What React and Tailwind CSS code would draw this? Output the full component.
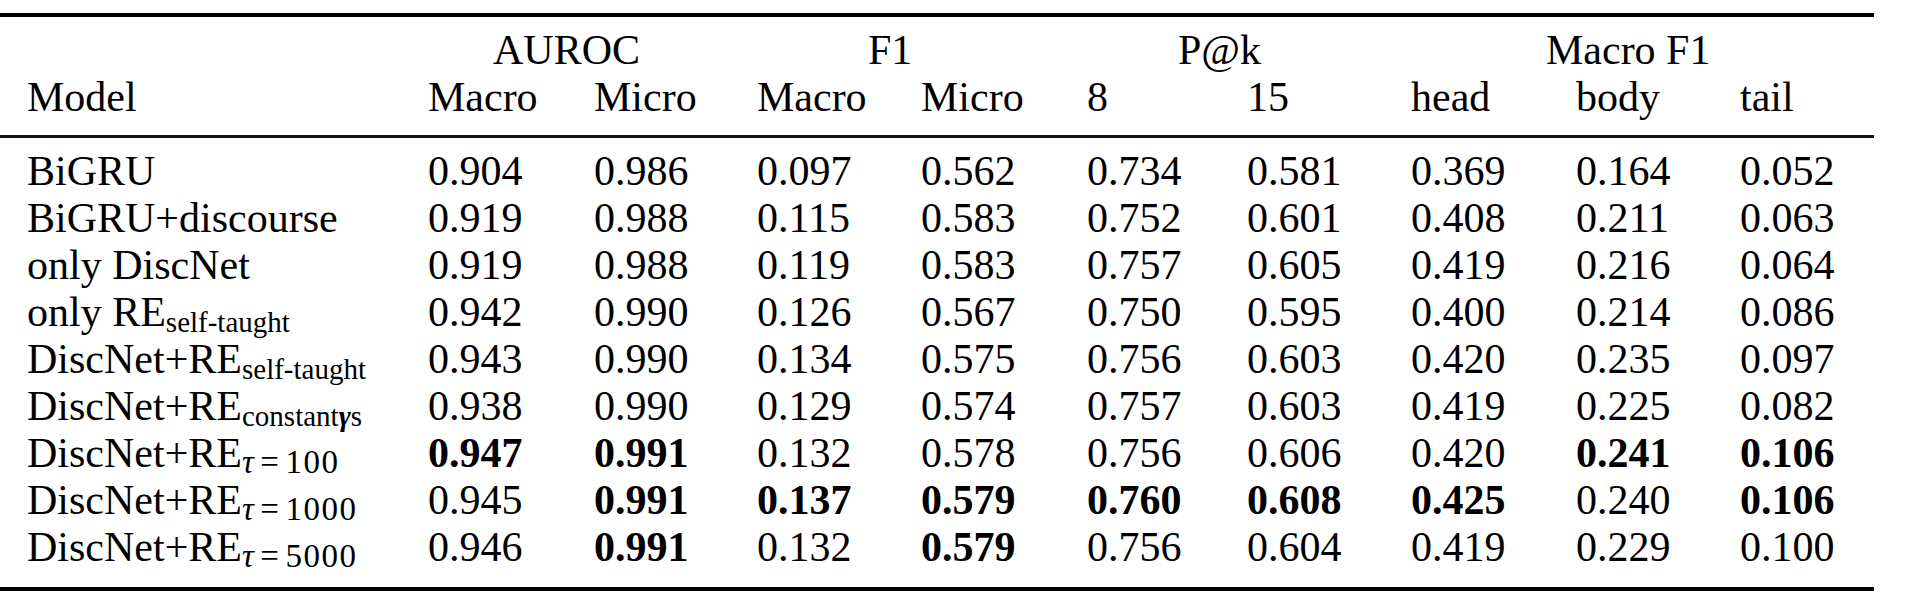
const cols = 'grid grid-cols-[428px_166px_163px_164px_166px_160px_164px_165px_164px_134px]';

function Tau({ n }) {
  return (
    <span className="text-[33px] leading-none align-[-6px] tracking-[1.5px]">
      <span className="italic mr-[5px]">τ</span>
      <span className="mr-[5px]">=</span>
      {n}
    </span>
  );
}

function Sub({ children }) {
  return <span className="text-[29px] leading-none align-[-6px]">{children}</span>;
}

const rows = [
  { name: <>BiGRU</>, v: ['0.904', '0.986', '0.097', '0.562', '0.734', '0.581', '0.369', '0.164', '0.052'] },
  { name: <>BiGRU+discourse</>, v: ['0.919', '0.988', '0.115', '0.583', '0.752', '0.601', '0.408', '0.211', '0.063'] },
  { name: <>only DiscNet</>, v: ['0.919', '0.988', '0.119', '0.583', '0.757', '0.605', '0.419', '0.216', '0.064'] },
  { name: <>only RE<Sub>self-taught</Sub></>, v: ['0.942', '0.990', '0.126', '0.567', '0.750', '0.595', '0.400', '0.214', '0.086'] },
  { name: <>DiscNet+RE<Sub>self-taught</Sub></>, v: ['0.943', '0.990', '0.134', '0.575', '0.756', '0.603', '0.420', '0.235', '0.097'] },
  { name: <>DiscNet+RE<Sub>constant<b className="italic">γ</b>s</Sub></>, v: ['0.938', '0.990', '0.129', '0.574', '0.757', '0.603', '0.419', '0.225', '0.082'] },
  { name: <>DiscNet+RE<Tau n="100" /></>, v: ['*0.947', '*0.991', '0.132', '0.578', '0.756', '0.606', '0.420', '*0.241', '*0.106'] },
  { name: <>DiscNet+RE<Tau n="1000" /></>, v: ['0.945', '*0.991', '*0.137', '*0.579', '*0.760', '*0.608', '*0.425', '0.240', '*0.106'] },
  { name: <>DiscNet+RE<Tau n="5000" /></>, v: ['0.946', '*0.991', '0.132', '*0.579', '0.756', '0.604', '0.419', '0.229', '0.100'] },
];

const subheads = ['Macro', 'Micro', 'Macro', 'Micro', '8', '15', 'head', 'body', 'tail'];

export default function App() {
  return (
    <div className="w-[1908px] h-[612px] bg-white text-black pt-[13px] overflow-hidden" style={{ fontFamily: '"Liberation Serif", "Times New Roman", serif' }}>
      <div className="w-[1874px] text-[42px] leading-[47px]">
        <div className="h-[4px] bg-black" />

        <div className={`${cols} mt-[10px] h-[47px]`}>
          <div />
          <div className="col-span-2 pl-[65px]">AUROC</div>
          <div className="col-span-2 pl-[111px]">F1</div>
          <div className="col-span-2 pl-[91px]">P@k</div>
          <div className="col-span-3 pl-[135px]">Macro F1</div>
          <div />
        </div>

        <div className={`${cols} h-[47px]`}>
          <div className="pl-[27px]">Model</div>
          {subheads.map((s, i) => (
            <div key={i}>{s}</div>
          ))}
          <div />
        </div>

        <div className="mt-[14px] h-[3px] bg-[#111]" />

        <div className="mt-[10px]">
          {rows.map((r, i) => (
            <div key={i} className={`${cols} h-[47px] whitespace-nowrap`}>
              <div className="pl-[27px]">{r.name}</div>
              {r.v.map((x, j) =>
                x.startsWith('*') ? (
                  <div key={j} className="font-bold">{x.slice(1)}</div>
                ) : (
                  <div key={j}>{x}</div>
                )
              )}
              <div />
            </div>
          ))}
        </div>

        <div className="mt-[16px] h-[4px] bg-black" />
      </div>
    </div>
  );
}
